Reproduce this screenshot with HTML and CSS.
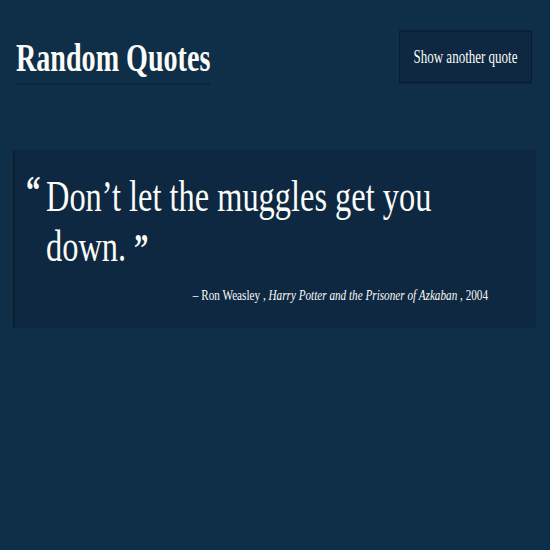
FILE: index.html
```html
<!DOCTYPE html>
<html lang="en">
<head>
<meta charset="utf-8">
<title>Random Quotes</title>
<link rel="stylesheet" href="styles.css">
</head>
<body>
<div class="page">
  <header class="top">
    <h1 class="title">Random Quotes</h1>
    <button class="btn">Show another quote</button>
  </header>
  <main class="card">
    <blockquote class="quote">
      <p class="quote-text"><span class="mark open">“</span><span class="words">Don’t let the muggles get you down.</span></p>
      <footer class="cite">– Ron Weasley , <em>Harry Potter and the Prisoner of Azkaban</em> , 2004</footer>
    </blockquote>
  </main>
</div>
</body>
</html>
```
FILE: styles.css
```css
html, body {
  margin: 0;
  padding: 0;
  background: #0f2e48;
  color: #fbfbf8;
  font-family: "Liberation Serif", "Times New Roman", serif;
}
body {
  min-height: 100vh;
}
/* the page uses a tall, narrow type: everything is stretched vertically */
.page {
  width: 550px;
  transform: scaleY(1.3889);
  transform-origin: 0 0;
}
.top {
  display: flex;
  justify-content: space-between;
  align-items: flex-start;
  padding: 22.3px 18px 0 16px;
}
.title {
  margin: 5.8px 0 0 0;
  font-size: 28.1px;
  font-weight: bold;
  line-height: 28.8px;
  padding-bottom: 2.9px;
  border-bottom: 1.44px solid #0a2236;
}
.btn {
  font-family: inherit;
  font-size: 13px;
  color: #fbfbf8;
  background: #0d2840;
  border: 1px solid #0a1e31;
  border-width: 0.72px 1px;
  width: 133px;
  height: 37.4px;
  padding: 0;
}
.card {
  margin: 46.8px 14px 0 13px;
  background: #0d2840;
  border-left: 2px solid #0a1e31;
  padding: 15.1px 48px 17.3px 11px;
}
.quote {
  margin: 0;
}
.quote-text {
  margin: 0;
  padding-left: 20px;
  font-size: 32.4px;
  line-height: 36.7px;
  position: relative;
}
.mark {
  font-size: 28.8px;
  font-weight: bold;
}
.open {
  position: absolute;
  left: 0;
  top: 0.7px;
  line-height: 28.8px;
}
.words::after {
  content: "\201D";
  font-size: 28.8px;
  font-weight: bold;
  margin-left: 8px;
}
.cite {
  text-align: right;
  font-size: 11.2px;
  line-height: 11.5px;
  margin: 10.1px 0 0 0;
}
.cite em {
  font-style: italic;
}
```
